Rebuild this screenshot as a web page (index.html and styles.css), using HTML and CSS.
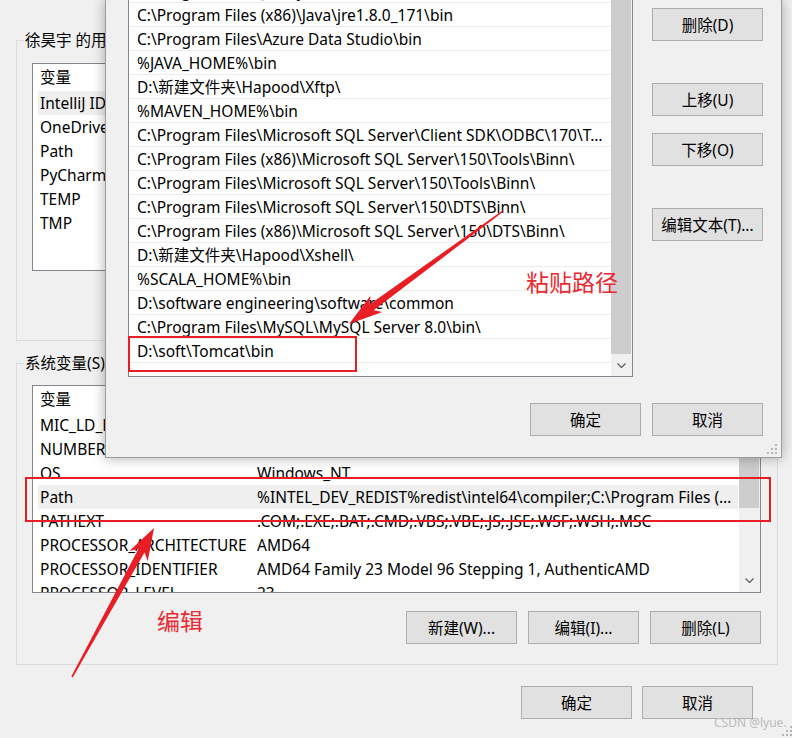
FILE: index.html
```html
<!DOCTYPE html>
<html lang="zh-CN">
<head>
    <meta charset="UTF-8">
    <title>环境变量</title>
    <link rel="stylesheet" href="styles.css">
</head>
<body>
<div class="env">
    <fieldset class="group group--user">
        <legend class="group__title">徐昊宇 的用户变量(U)</legend>
        <div class="listview">
            <div class="listview__body">
                <div class="listview__row listview__row--head"><span class="listview__name">变量</span><span class="listview__value">值</span></div>
                <div class="listview__row listview__row--selected"><span class="listview__name">IntelliJ IDEA Community Edition</span><span class="listview__value">D:\IntelliJ IDEA Community Edition 2021.1\bin;</span></div>
                <div class="listview__row"><span class="listview__name">OneDrive</span><span class="listview__value">C:\Users\徐昊宇\OneDrive</span></div>
                <div class="listview__row"><span class="listview__name">Path</span><span class="listview__value">C:\Users\徐昊宇\AppData\Local\Microsoft\WindowsApps;</span></div>
                <div class="listview__row"><span class="listview__name">PyCharm Community Edition</span><span class="listview__value">D:\PyCharm Community Edition 2021.1\bin;</span></div>
                <div class="listview__row"><span class="listview__name">TEMP</span><span class="listview__value">C:\Users\徐昊宇\AppData\Local\Temp</span></div>
                <div class="listview__row"><span class="listview__name">TMP</span><span class="listview__value">C:\Users\徐昊宇\AppData\Local\Temp</span></div>
            </div>
        </div>
        <div class="group__buttons">
            <button class="button">新建(N)...</button>
            <button class="button">编辑(E)...</button>
            <button class="button">删除(D)</button>
        </div>
    </fieldset>

    <fieldset class="group group--system">
        <legend class="group__title">系统变量(S)</legend>
        <div class="listview">
            <div class="listview__body">
                <div class="listview__row listview__row--head"><span class="listview__name">变量</span><span class="listview__value">值</span></div>
                <div class="listview__row"><span class="listview__name">MIC_LD_LIBRARY_PATH</span><span class="listview__value">%INTEL_DEV_REDIST%compiler\lib\mic</span></div>
                <div class="listview__row"><span class="listview__name">NUMBER_OF_PROCESSORS</span><span class="listview__value">12</span></div>
                <div class="listview__row"><span class="listview__name">OS</span><span class="listview__value">Windows_NT</span></div>
                <div class="listview__row listview__row--selected"><span class="listview__name">Path</span><span class="listview__value">%INTEL_DEV_REDIST%redist\intel64\compiler;C:\Program Files (x86)\Common Files\Oracle\Java\javapath;</span></div>
                <div class="listview__row"><span class="listview__name">PATHEXT</span><span class="listview__value">.COM;.EXE;.BAT;.CMD;.VBS;.VBE;.JS;.JSE;.WSF;.WSH;.MSC</span></div>
                <div class="listview__row"><span class="listview__name">PROCESSOR_ARCHITECTURE</span><span class="listview__value">AMD64</span></div>
                <div class="listview__row"><span class="listview__name">PROCESSOR_IDENTIFIER</span><span class="listview__value">AMD64 Family 23 Model 96 Stepping 1, AuthenticAMD</span></div>
                <div class="listview__row"><span class="listview__name">PROCESSOR_LEVEL</span><span class="listview__value">23</span></div>
            </div>
            <div class="scrollbar scrollbar--back">
                <div class="scrollbar__arrow"></div>
                <div class="scrollbar__thumb"></div>
                <div class="scrollbar__track"></div>
                <div class="scrollbar__arrow">
                    <svg width="9" height="5" viewBox="0 0 9 5"><polyline points="0.5,0.5 4.5,4.5 8.5,0.5" fill="none" stroke="#606060" stroke-width="1.3"/></svg>
                </div>
            </div>
        </div>
        <div class="group__buttons">
            <button class="button">新建(W)...</button>
            <button class="button">编辑(I)...</button>
            <button class="button">删除(L)</button>
        </div>
    </fieldset>

    <div class="env__footer">
        <button class="button">确定</button>
        <button class="button">取消</button>
    </div>
</div>

<svg class="grip grip--env" width="12" height="12" viewBox="0 0 12 12">
    <rect x="8" y="0" width="2" height="2"/><rect x="4" y="4" width="2" height="2"/><rect x="8" y="4" width="2" height="2"/>
    <rect x="0" y="8" width="2" height="2"/><rect x="4" y="8" width="2" height="2"/><rect x="8" y="8" width="2" height="2"/>
</svg>
<div class="watermark">CSDN @lyue.</div>

<div class="editor">
    <div class="editor__main">
        <div class="pathlist">
            <div class="pathlist__items">
                <div class="pathlist__item">C:\Program Files\Java\jdk1.8.0_171\bin</div>
                <div class="pathlist__item">C:\Program Files (x86)\Java\jre1.8.0_171\bin</div>
                <div class="pathlist__item">C:\Program Files\Azure Data Studio\bin</div>
                <div class="pathlist__item">%JAVA_HOME%\bin</div>
                <div class="pathlist__item">D:\新建文件夹\Hapood\Xftp\</div>
                <div class="pathlist__item">%MAVEN_HOME%\bin</div>
                <div class="pathlist__item">C:\Program Files\Microsoft SQL Server\Client SDK\ODBC\170\Tools\Binn\</div>
                <div class="pathlist__item">C:\Program Files (x86)\Microsoft SQL Server\150\Tools\Binn\</div>
                <div class="pathlist__item">C:\Program Files\Microsoft SQL Server\150\Tools\Binn\</div>
                <div class="pathlist__item">C:\Program Files\Microsoft SQL Server\150\DTS\Binn\</div>
                <div class="pathlist__item">C:\Program Files (x86)\Microsoft SQL Server\150\DTS\Binn\</div>
                <div class="pathlist__item">D:\新建文件夹\Hapood\Xshell\</div>
                <div class="pathlist__item">%SCALA_HOME%\bin</div>
                <div class="pathlist__item">D:\software engineering\software\common</div>
                <div class="pathlist__item">C:\Program Files\MySQL\MySQL Server 8.0\bin\</div>
                <div class="pathlist__item">D:\soft\Tomcat\bin</div>
            </div>
            <div class="scrollbar scrollbar--front">
                <div class="scrollbar__thumb"></div>
                <div class="scrollbar__arrow">
                    <svg width="9" height="5" viewBox="0 0 9 5"><polyline points="0.5,0.5 4.5,4.5 8.5,0.5" fill="none" stroke="#606060" stroke-width="1.3"/></svg>
                </div>
            </div>
        </div>
        <div class="editor__side">
            <button class="button">删除(D)</button>
            <button class="button editor__gap">上移(U)</button>
            <button class="button editor__gap--small">下移(O)</button>
            <button class="button editor__gap">编辑文本(T)...</button>
        </div>
    </div>
    <div class="editor__footer">
        <button class="button">确定</button>
        <button class="button">取消</button>
    </div>
    <svg class="grip grip--editor" width="12" height="12" viewBox="0 0 12 12">
        <rect x="8" y="0" width="2" height="2"/><rect x="4" y="4" width="2" height="2"/><rect x="8" y="4" width="2" height="2"/>
        <rect x="0" y="8" width="2" height="2"/><rect x="4" y="8" width="2" height="2"/><rect x="8" y="8" width="2" height="2"/>
    </svg>
</div>

<svg class="marks" width="792" height="738" viewBox="0 0 792 738">
    <rect x="129" y="337" width="227" height="34" fill="none" stroke="#e81e25" stroke-width="2"/>
    <rect x="26" y="478" width="744" height="43" fill="none" stroke="#e81e25" stroke-width="2"/>
    <polygon fill="#e81e25" points="503.5,211.6 373.7,310.2 382.3,312 349,324 370.5,295.8 369.5,304.6 502.5,210.4"/>
    <polygon fill="#e81e25" points="72.7,677.4 144.5,552.5 147.8,561.1 154,528 129.4,551 138.4,549.1 71.3,676.6"/>
</svg>
<span class="note note--paste">粘贴路径</span>
<span class="note note--edit">编辑</span>
</body>
</html>
```

FILE: styles.css
```css
html,
body {
    margin: 0;
    padding: 0;
    width: 100%;
    height: 100%;
    background: #f0f0f0;
}

body {
    position: relative;
    overflow: hidden;
    font-family: "Noto Sans", "Noto Sans CJK SC", sans-serif;
    font-size: 15.5px;
    color: #000;
}

.env {
    padding: 30px 14px 0 16px;
}

.group {
    margin: 0;
    min-width: 0;
    border: 1px solid #dcdcdc;
    padding: 13px 16px 18px 15px;
}

.group--system {
    margin-top: 12px;
    padding-top: 12px;
    padding-bottom: 20px;
}

.group__title {
    margin-left: -8px;
    padding: 0 1px;
    height: 20px;
    line-height: 20px;
}

.group__buttons {
    display: flex;
    justify-content: flex-end;
    gap: 11px;
    margin-top: 18px;
}

.button {
    width: 111px;
    height: 33px;
    padding: 0;
    box-sizing: border-box;
    border: 1px solid #adadad;
    background: #e1e1e1;
    font: inherit;
    color: #000;
}

.listview {
    display: flex;
    height: 208px;
    box-sizing: border-box;
    border: 1px solid #828790;
    background: #fff;
    overflow: hidden;
}

.listview__body {
    flex: 1;
    min-width: 0;
    padding: 0 1px 0 5px;
}

.listview__row {
    display: flex;
    height: 24px;
    line-height: 25px;
    padding-left: 2px;
    white-space: nowrap;
}

.listview__row--head {
    height: 27px;
    line-height: 27px;
}

.listview__row--selected {
    background: #efefef;
}

.listview__name {
    flex: none;
    width: 217px;
    overflow: hidden;
    text-overflow: ellipsis;
}

.listview__value {
    flex: 1;
    min-width: 0;
    overflow: hidden;
    text-overflow: ellipsis;
}

.scrollbar {
    display: flex;
    flex-direction: column;
    flex: none;
    width: 21px;
    background: #f0f0f0;
}

.scrollbar__thumb {
    margin-right: 1px;
    background: #cdcdcd;
}

.scrollbar__track {
    flex: 1;
}

.scrollbar__arrow {
    display: flex;
    align-items: center;
    justify-content: center;
    height: 23px;
    padding-right: 1px;
}

.scrollbar--back .scrollbar__thumb {
    height: 99px;
}

.scrollbar--back .scrollbar__arrow:last-child {
    height: 24px;
}

.scrollbar--front .scrollbar__thumb {
    flex: 1;
}

.scrollbar--front .scrollbar__arrow {
    height: 22px;
}

.env__footer {
    display: flex;
    justify-content: flex-end;
    gap: 10px;
    margin-top: 21px;
    padding-right: 25px;
}

.editor {
    position: absolute;
    left: 105px;
    top: 0;
    width: 677px;
    height: 458px;
    box-sizing: border-box;
    padding: 0 18px 0 22px;
    border: 1px solid #9c9c9c;
    border-top: 0;
    background: #f0f0f0;
    box-shadow: 0 0 12px rgba(0, 0, 0, .32);
}

.editor__main {
    display: flex;
    gap: 19px;
}

.pathlist {
    display: flex;
    width: 505px;
    height: 377px;
    box-sizing: border-box;
    border: 1px solid #828790;
    border-top: 0;
    background: #fff;
    overflow: hidden;
}

.pathlist__items {
    flex: 1;
    min-width: 0;
    margin-top: -21px;
}

.pathlist__item {
    height: 24px;
    box-sizing: border-box;
    padding: 0 4px 0 8px;
    border-bottom: 1px solid #ececec;
    line-height: 24px;
    white-space: nowrap;
    overflow: hidden;
    text-overflow: ellipsis;
}

.editor__side {
    display: flex;
    flex-direction: column;
    padding-top: 8px;
}

.editor__gap {
    margin-top: 42px;
}

.editor__gap--small {
    margin-top: 17px;
}

.editor__footer {
    display: flex;
    justify-content: flex-end;
    gap: 11px;
    margin-top: 26px;
}

.grip {
    position: absolute;
    fill: #b5b5b5;
}

.grip--env {
    left: 782px;
    top: 726px;
}

.grip--editor {
    right: 2px;
    bottom: 1px;
}

.watermark {
    position: absolute;
    left: 714px;
    top: 714px;
    font-size: 12px;
    color: #bcbcbc;
}

.marks {
    position: absolute;
    left: 0;
    top: 0;
    pointer-events: none;
}

.note {
    position: absolute;
    font-family: "Noto Sans CJK SC", sans-serif;
    font-size: 23px;
    line-height: 1;
    color: #ea2a32;
}

.note--paste {
    left: 526px;
    top: 270px;
}

.note--edit {
    left: 157px;
    top: 609px;
}
```
